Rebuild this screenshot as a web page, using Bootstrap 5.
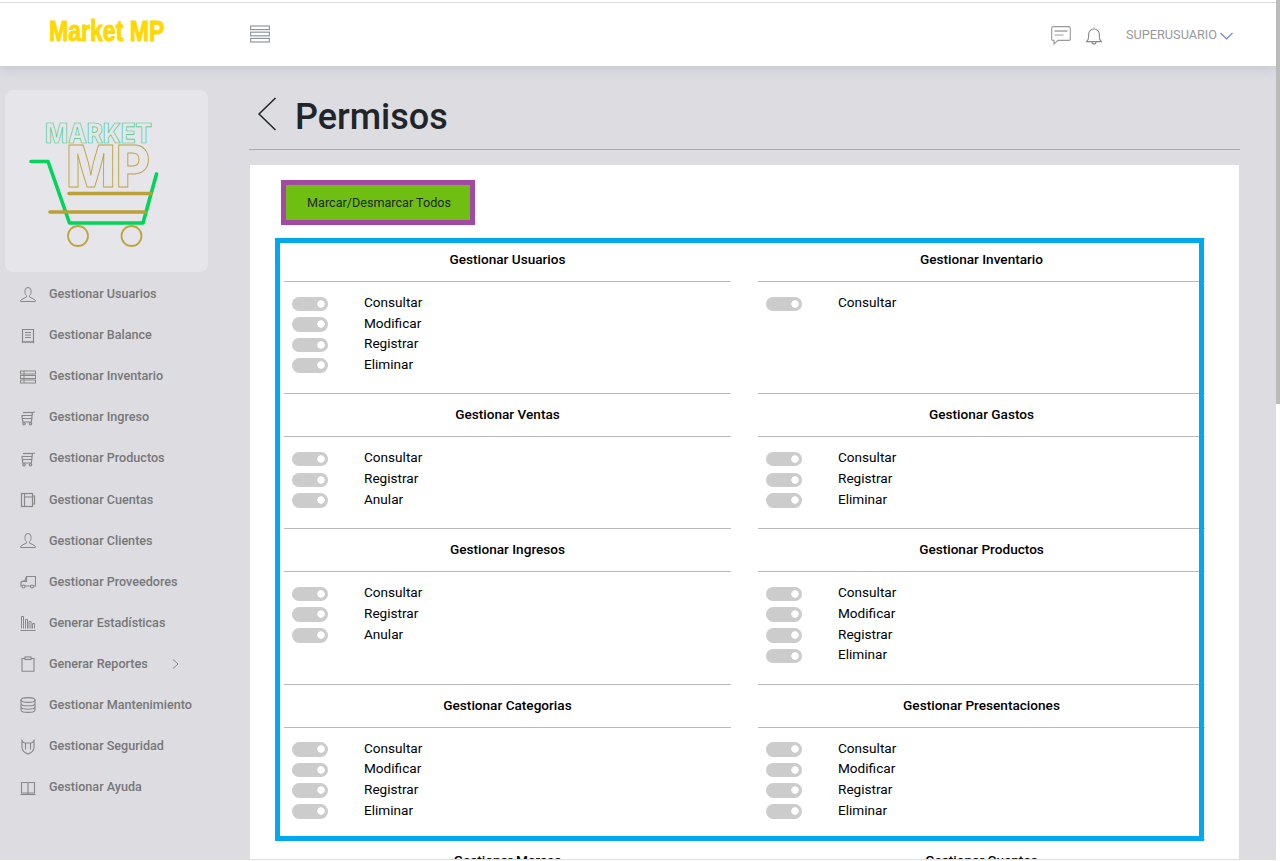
<!DOCTYPE html>
<html lang="es">
<head>
    <meta charset="UTF-8">
    <meta name="viewport" content="width=device-width, initial-scale=1.0">
    <title>Market MP - Permisos</title>
    <link href="https://cdn.jsdelivr.net/npm/bootstrap@5.3.0/dist/css/bootstrap.min.css" rel="stylesheet">
    <style>
        html, body { height: 861px; overflow: hidden; }
        body { background: #fff; font-family: Roboto, "Liberation Sans", sans-serif; }
        .page-shell { margin-top: 2px; height: 858px; background: #dcdce1; border-top: 1px solid #ddd; border-bottom: 1px solid #ddd; overflow: hidden; }
        .scroll-rail { width: 4px; }
        .scroll-thumb { height: 404px; background: #bbb; }
        .top-bar { height: 63px; background: #fff; box-shadow: 0 2px 12px rgba(110, 110, 160, .22); position: relative; z-index: 2; flex: none; }
        .brand-name { width: 250px; padding-left: 49px; margin-top: -5px; flex: none; }
        .brand-text { font-family: "Liberation Sans", sans-serif; font-weight: 700; font-size: 29px; line-height: 1; color: #ffd800; -webkit-text-stroke: 1px #ffd800; transform: scaleX(.795); transform-origin: left center; white-space: nowrap; }
        .burger-icon { margin-top: -2px; }
        .top-tools { margin-right: 43px; padding-top: 2px; }
        .top-tools .chat-icon { margin-right: 15px; }
        .user-name { font-size: 12.7px; color: #999; margin: -2px 3px 0 24px; }
        .side-col { width: 249px; padding: 24px 0 0 5px; flex: none; }
        .logo-box { width: 203px; height: 182px; background: #e6e6ea; border-radius: 8px; margin-bottom: 2px; }
        .side-link { height: 41.1px; padding-left: 15px; font-size: 12.6px; font-weight: 500; color: #777; text-decoration: none; width: 215px; }
        .side-link svg { margin-right: 13px; flex: none; }
        .side-link .side-arrow { margin: 0 0 0 auto; position: relative; left: -41px; }
        .main-col { width: 991px; }
        .page-head { height: 84px; border-bottom: 1px solid #aaa; padding: 12px 0 0 8px; }
        .page-head h1 { font-size: 36px; font-weight: 500; color: #212529; margin: 8px 0 0 18px; }
        .panel-white { margin: 15px 1px 0; background: #fff; padding: 15px 0 0 25px; }
        .btn-marcar { margin-left: 6px; width: 194px; height: 45px; border: 5px solid #a349a4; border-radius: 0; background: #6fbf12; font-size: 12.6px; color: #212529; padding: 1px 0 0 2px; }
        .btn-marcar:hover { background: #6fbf12; border-color: #a349a4; color: #212529; }
        .perm-wrap { margin-top: 13px; padding-left: 9px; position: relative; }
        .perm-grid { display: grid; grid-template-columns: 447px 447px; column-gap: 27px; }
        .perm-group { border-top: 1px solid #bbb; padding-bottom: 18.8px; }
        .perm-title { height: 43px; border-bottom: 1px solid #bbb; font-size: 13.6px; font-weight: 500; color: #000; line-height: 41px; text-align: center; }
        .perm-list { padding: 10px 0 0 8px; }
        .perm-item { height: 20.67px; font-size: 13.6px; line-height: 20.67px; color: #000; }
        .perm-item span { margin-left: 36px; }
        .perm-item .form-check-input { width: 36px; height: 14.5px; margin: 4.5px 0 0; float: none; border: 0; border-radius: 8px; background-color: #ccc; background-image: radial-gradient(circle at 29px 7px, #fff 3.4px, transparent 4px); background-position: 0 0; }
        .frame-mark { position: absolute; left: 0; top: 0; width: 929px; height: 603px; border: 5px solid #00a8ee; pointer-events: none; }
    </style>
</head>
<body class="d-flex">
    <div class="page-shell d-flex flex-column flex-grow-1">
        <header class="top-bar d-flex align-items-center">
            <div class="brand-name"><span class="brand-text d-inline-block">Market MP</span></div>
            <svg class="burger-icon" width="20" height="18" viewBox="0 0 20 18" fill="none" stroke="#8f979f" stroke-width="1.2"><rect x=".6" y="1" width="18.8" height="3.6"/><rect x=".6" y="7.2" width="18.8" height="3.6"/><rect x=".6" y="13.4" width="18.8" height="3.6"/></svg>
            <div class="top-tools d-flex align-items-center ms-auto">
                <svg class="chat-icon" width="20" height="19" viewBox="0 0 20 19" fill="none" stroke="#999" stroke-width="1.1"><path d="M2 .6h16a1.3 1.3 0 0 1 1.3 1.3v11.2a1.3 1.3 0 0 1-1.3 1.3H7l-4 3.6v-3.6H2A1.3 1.3 0 0 1 .7 13.1V1.9A1.3 1.3 0 0 1 2 .6z"/><path stroke="#bbb" stroke-width="2" d="M3.5 5h13"/><path stroke="#bbb" stroke-width="1.4" d="M3.5 9h9"/></svg>
                <svg width="16" height="18" viewBox="0 0 16 18" fill="none" stroke="#888" stroke-width="1.1"><path d="M.6 14.6c1.6-1.2 2-2.4 2-4.6V7.4a5.4 5.4 0 0 1 10.8 0V10c0 2.2.4 3.4 2 4.6z"/><path d="M6 15a2 2 0 0 0 4 0"/><path d="M8 1.5V.5"/></svg>
                <span class="user-name">SUPERUSUARIO</span>
                <svg width="13" height="8" viewBox="0 0 13 8" fill="none" stroke="#6f86e6" stroke-width="1.2"><path d="M.5 1l6 6 6-6"/></svg>
            </div>
        </header>
        <div class="d-flex flex-grow-1">
            <nav class="side-col">
                <div class="logo-box">
                    <svg width="203" height="182" viewBox="5 90 203 182" fill="none">
                        <text x="45" y="143" textLength="107" lengthAdjust="spacingAndGlyphs" font-family="Inter" font-weight="800" font-size="27" stroke="#3ecb80" stroke-width=".7">MARKET</text>
                        <text x="66" y="187" textLength="84" lengthAdjust="spacingAndGlyphs" font-family="Inter" font-weight="800" font-size="58" stroke="#bda443" stroke-width="1">MP</text>
                        <path d="M31 161.500h17l21.500 61.500h73.500l13.500-49" stroke="#00d45a" stroke-width="3.600" stroke-linecap="round" stroke-linejoin="round"/>
                        <path d="M69 193.500h82M50 212h95" stroke="#b9a037" stroke-width="3.600" stroke-linecap="round"/>
                        <circle cx="78" cy="236" r="10" stroke="#bda443" stroke-width="1.800"/>
                        <circle cx="131.500" cy="236" r="10" stroke="#bda443" stroke-width="1.800"/>
                    </svg>
                </div>
                <a class="side-link d-flex align-items-center" href="#"><svg width="16" height="16" viewBox="0 0 16 16" fill="none" stroke="#888" stroke-width="1"><path d="M5 5.500V3.500a3 3 0 0 1 6 0v2c0 1.500-.8 2.500-1.500 3v1.500l5 2.500c.5.300.8.800.8 1.500v.5H.700V14c0-.7.300-1.200.8-1.500l5-2.500V8.500C5.800 8 5 7 5 5.500z"/></svg>Gestionar Usuarios</a>
                <a class="side-link d-flex align-items-center" href="#"><svg width="16" height="16" viewBox="0 0 16 16" fill="none" stroke="#888" stroke-width="1.200"><path d="M2.500 14.500V1.500h11v13l-1.400-1-1.400 1-1.300-1-1.300 1-1.300-1-1.400 1-1.400-1z"/><path d="M5 4.500h6M5 7h6M5 9.500h6"/></svg>Gestionar Balance</a>
                <a class="side-link d-flex align-items-center" href="#"><svg width="16" height="16" viewBox="0 0 16 16" fill="none" stroke="#888" stroke-width="1"><rect x=".5" y="2" width="15" height="3"/><rect x=".5" y="6.500" width="15" height="3"/><rect x=".5" y="11" width="15" height="3"/><path d="M4 2v12"/></svg>Gestionar Inventario</a>
                <a class="side-link d-flex align-items-center" href="#"><svg width="16" height="16" viewBox="0 0 16 16" fill="none" stroke="#888" stroke-width="1.200"><path d="M1.500 5.500h11M2 5.500l.8 6.500h8.600l1-9.500 2.500-.5M3 8.500h9.500"/><path d="M3 2.500h9"/><circle cx="4" cy="13.800" r="1.200"/><circle cx="10.500" cy="13.800" r="1.200"/></svg>Gestionar Ingreso</a>
                <a class="side-link d-flex align-items-center" href="#"><svg width="16" height="16" viewBox="0 0 16 16" fill="none" stroke="#888" stroke-width="1.200"><path d="M1.500 5.500h11M2 5.500l.8 6.500h8.600l1-9.500 2.500-.5M3 8.500h9.500"/><path d="M3 2.500h9"/><circle cx="4" cy="13.800" r="1.200"/><circle cx="10.500" cy="13.800" r="1.200"/></svg>Gestionar Productos</a>
                <a class="side-link d-flex align-items-center" href="#"><svg width="16" height="16" viewBox="0 0 16 16" fill="none" stroke="#888" stroke-width="1.200"><rect x="1.500" y="1.500" width="11" height="13"/><path d="M4.500 1.500v13M4.500 5h8M12.500 4h2v8h-2"/></svg>Gestionar Cuentas</a>
                <a class="side-link d-flex align-items-center" href="#"><svg width="16" height="16" viewBox="0 0 16 16" fill="none" stroke="#888" stroke-width="1"><path d="M5 5.500V3.500a3 3 0 0 1 6 0v2c0 1.500-.8 2.500-1.500 3v1.500l5 2.500c.5.300.8.800.8 1.500v.5H.700V14c0-.7.300-1.200.8-1.500l5-2.500V8.500C5.800 8 5 7 5 5.500z"/></svg>Gestionar Clientes</a>
                <a class="side-link d-flex align-items-center" href="#"><svg width="16" height="16" viewBox="0 0 16 16" fill="none" stroke="#888" stroke-width="1.100"><path d="M5 12h6M13 12h2.500V2.500H6.500L5 6.500 1 8v4h1.200"/><path d="M6.500 2.500v5H1.500"/><circle cx="3.500" cy="12.500" r="1.500"/><circle cx="12" cy="12.500" r="1.500"/></svg>Gestionar Proveedores</a>
                <a class="side-link d-flex align-items-center" href="#"><svg width="16" height="16" viewBox="0 0 16 16" fill="none" stroke="#888" stroke-width="1"><path d="M.5 15.500h15M1.500 13.500V1.500h2v12M5.500 13.500V4.500h2v9M9 13.500v-7h2v7M12.500 13.500V8.500h2v5"/></svg>Generar Estadísticas</a>
                <a class="side-link d-flex align-items-center" href="#"><svg width="16" height="16" viewBox="0 0 16 16" fill="none" stroke="#888" stroke-width="1.100"><path d="M5 2.500H2v12.800h12V2.500h-3"/><rect x="5" y="1" width="6" height="2.500"/></svg>Generar Reportes<svg class="side-arrow" width="7" height="10" viewBox="0 0 7 10" fill="none" stroke="#888" stroke-width="1"><path d="M1 .5l5 4.500-5 4.500"/></svg></a>
                <a class="side-link d-flex align-items-center" href="#"><svg width="16" height="16" viewBox="0 0 16 16" fill="none" stroke="#888" stroke-width="1.100"><ellipse cx="8" cy="3" rx="7" ry="2.400"/><path d="M1 3v10c0 1.300 3.100 2.400 7 2.400s7-1.100 7-2.400V3M1 6.400c0 1.300 3.100 2.400 7 2.400s7-1.100 7-2.400M1 9.800c0 1.300 3.100 2.400 7 2.400s7-1.100 7-2.400"/></svg>Gestionar Mantenimiento</a>
                <a class="side-link d-flex align-items-center" href="#"><svg width="16" height="16" viewBox="0 0 16 16" fill="none" stroke="#888" stroke-width="1.100"><path d="M2 1.500v7c0 3 2.500 5.200 6 6.500 3.500-1.300 6-3.500 6-6.500v-7c-1 1.800-2 2.500-3 2.500H5c-1 0-2-.7-3-2.500z"/><path d="M5.500 4v6.500M10.500 4v6.500"/></svg>Gestionar Seguridad</a>
                <a class="side-link d-flex align-items-center" href="#"><svg width="16" height="16" viewBox="0 0 16 16" fill="none" stroke="#888" stroke-width="1.100"><path d="M1.500 2.500h5.500c.5 0 1 .4 1 1V14c0-.5-.5-1-1-1H1.500zM14.500 2.500H9c-.5 0-1 .4-1 1V14c0-.5.5-1 1-1h5.500z"/><path d="M.5 14.500h15"/></svg>Gestionar Ayuda</a>
            </nav>
            <main class="main-col">
                <div class="page-head d-flex align-items-center">
                    <svg width="20" height="34" viewBox="0 0 20 34" fill="none" stroke="#212529" stroke-width="1.500"><path d="M18.500 1L2 17l16.500 16"/></svg>
                    <h1>Permisos</h1>
                </div>
                <section class="panel-white">
                    <button type="button" class="btn btn-marcar">Marcar/Desmarcar Todos</button>
                    <div class="perm-wrap">
                        <div class="perm-grid" id="permGrid"></div>
                        <div class="frame-mark"></div>
                    </div>
                </section>
            </main>
        </div>
    </div>
    <div class="scroll-rail flex-shrink-0"><div class="scroll-thumb"></div></div>

    <script src="https://cdn.jsdelivr.net/npm/bootstrap@5.3.0/dist/js/bootstrap.bundle.min.js"></script>
    <script>
        const groups = [
            ["Gestionar Usuarios", ["Consultar", "Modificar", "Registrar", "Eliminar"]],
            ["Gestionar Inventario", ["Consultar"]],
            ["Gestionar Ventas", ["Consultar", "Registrar", "Anular"]],
            ["Gestionar Gastos", ["Consultar", "Registrar", "Eliminar"]],
            ["Gestionar Ingresos", ["Consultar", "Registrar", "Anular"]],
            ["Gestionar Productos", ["Consultar", "Modificar", "Registrar", "Eliminar"]],
            ["Gestionar Categorias", ["Consultar", "Modificar", "Registrar", "Eliminar"]],
            ["Gestionar Presentaciones", ["Consultar", "Modificar", "Registrar", "Eliminar"]],
            ["Gestionar Marcas", ["Consultar"]],
            ["Gestionar Cuentas", ["Consultar"]]
        ];
        const grid = document.getElementById("permGrid");
        groups.forEach(([title, perms]) => {
            const items = perms.map(p =>
                `<div class="perm-item form-switch d-flex p-0"><input class="form-check-input" type="checkbox"><span>${p}</span></div>`
            ).join("");
            grid.insertAdjacentHTML("beforeend",
                `<div class="perm-group"><div class="perm-title">${title}</div><div class="perm-list">${items}</div></div>`);
        });
    </script>
</body>
</html>
